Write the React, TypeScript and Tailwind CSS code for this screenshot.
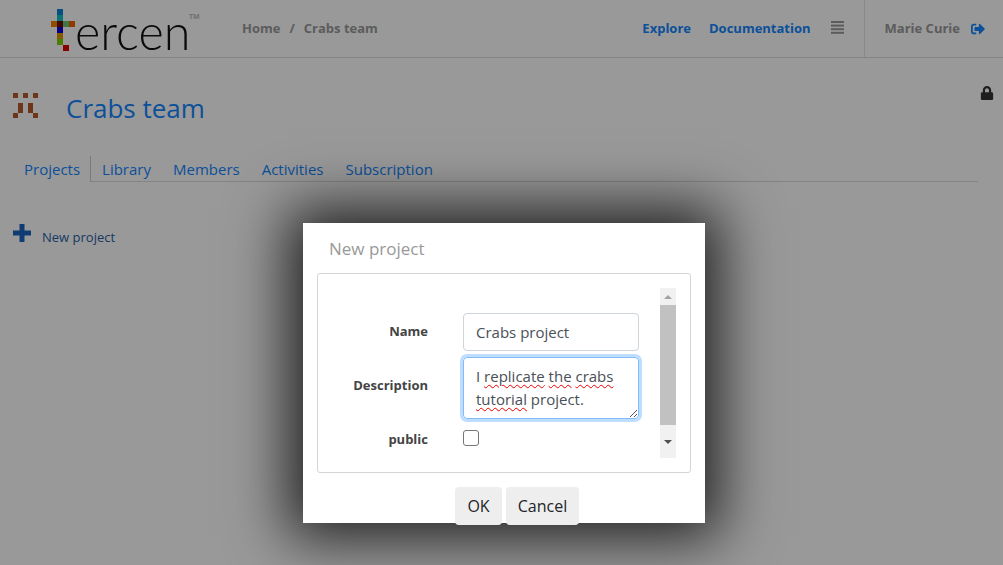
import { FaLock, FaSignOutAlt } from "react-icons/fa";

const FONT = { fontFamily: '"Open Sans", sans-serif' };

const TABS = ["Library", "Members", "Activities", "Subscription"];

function Logo() {
  return (
    <div className="relative h-[50px] w-[150px]">
      <svg width="26" height="42" viewBox="0 0 26 42" className="absolute left-0 top-[5px]">
        <rect x="7" y="0" width="6" height="6" fill="#0a84d8" />
        <rect x="7" y="6" width="6" height="6" fill="#12c2c8" />
        <rect x="1" y="12" width="6" height="6" fill="#f08000" />
        <rect x="7" y="12" width="6" height="6" fill="#6d1000" />
        <rect x="13" y="12" width="6" height="6" fill="#64c878" />
        <rect x="19" y="12" width="6" height="6" fill="#f06000" />
        <rect x="7" y="18" width="6" height="6" fill="#1000d0" />
        <rect x="7" y="24" width="6" height="6" fill="#e09800" />
        <rect x="7" y="30" width="6" height="6" fill="#80d000" />
        <rect x="13" y="36" width="6" height="6" fill="#e00000" />
      </svg>
      <span className="absolute left-[25px] top-[-4px] text-[48.5px] leading-[62px] font-light text-[#111]" style={{ fontFamily: "Lato, sans-serif" }}>ercen</span>
      <span className="absolute left-[139px] top-[8px] text-[7px] font-bold text-[#bbb]">TM</span>
    </div>
  );
}

function TeamIcon() {
  return (
    <svg width="26" height="26" viewBox="0 0 26 26">
      <g fill="#b85a28">
        <rect x="0" y="0" width="5" height="5" />
        <rect x="10" y="0" width="5" height="5" />
        <rect x="20" y="0" width="5" height="5" />
        <rect x="5" y="10" width="5" height="10" />
        <rect x="15" y="10" width="5" height="10" />
        <rect x="0" y="20" width="5" height="5" />
        <rect x="20" y="20" width="5" height="5" />
      </g>
    </svg>
  );
}

function Bad({ children }: { children: string }) {
  return <span className="underline decoration-[#e00] decoration-wavy decoration-1 underline-offset-2">{children}</span>;
}

export default function App() {
  return (
    <div className="relative h-[565px] w-[1003px] overflow-hidden bg-white" style={FONT}>
      <header className="flex h-[58px] items-center border-b border-[#ddd] pl-[50px]">
        <Logo />
        <nav className="ml-[42px] flex items-center gap-[9px] text-[13px] font-bold text-[#999]">
          <span>Home</span><span>/</span><span>Crabs team</span>
        </nav>
        <div className="ml-auto flex h-full items-center">
          <span className="text-[13px] font-bold text-[#1486ff]">Explore</span>
          <span className="ml-[18px] text-[13px] font-bold text-[#1486ff]">Documentation</span>
          <svg width="13" height="13" viewBox="0 0 13 13" className="mb-[3px] ml-[20px]">
            <g fill="#999">
              <rect y="0" width="13" height="2" />
              <rect y="3.6" width="13" height="2" />
              <rect y="7.2" width="13" height="2" />
              <rect y="10.8" width="13" height="2" />
            </g>
          </svg>
          <div className="ml-[20px] flex h-full items-center border-l border-[#e4e4e4] pl-[20px] pr-[18px]">
            <span className="text-[13px] font-bold text-[#999]">Marie Curie</span>
            <FaSignOutAlt className="ml-[11px] text-[14px] text-[#1486ff]" />
          </div>
        </div>
      </header>

      <div className="flex items-start pl-[13px] pr-[9px] pt-[35px]">
        <TeamIcon />
        <h1 className="-mt-[3px] ml-[27px] text-[26px] leading-[36px] text-[#1486ff]">Crabs team</h1>
        <FaLock className="ml-auto mt-[-7px] text-[14px] text-[#333]" />
      </div>

      <div className="ml-[8px] mr-[25px] mt-[30px] flex h-[26px] items-start border-b border-[#ddd] text-[15px] text-[#1486ff]">
        <span className="h-[26px] border-r border-[#ccc] bg-white pl-[16px] pr-[10px] leading-[26px]">Projects</span>
        {TABS.map(t => <span key={t} className="mx-[11px] leading-[26px]">{t}</span>)}
      </div>

      <div className="ml-[13px] mt-[42px] flex items-start">
        <svg width="18" height="18" viewBox="0 0 18 18">
          <path d="M6.5 0h5v6.5H18v5h-6.5V18h-5v-6.5H0v-5h6.5z" fill="#1a64c0" />
        </svg>
        <span className="ml-[11px] mt-[4px] text-[13px] text-[#2a5fa5]">New project</span>
      </div>

      {/* backdrop */}
      <div className="absolute inset-0 bg-black/40" />

      <div className="absolute left-[303px] top-[223px] flex h-[300px] w-[402px] flex-col bg-white px-[14px] shadow-[0_0_55px_14px_rgba(0,0,0,0.8)]">
        <div className="h-[50px] shrink-0 pl-[12px] pt-[12px] text-[17px] leading-[28px] text-[#999]">New project</div>
        <div className="flex h-[200px] shrink-0 rounded-[3px] border border-[#d5d5d5] pr-[14px] pt-[14px]">
          <div className="grid h-[170px] flex-1 grid-cols-[110px_176px] content-start gap-x-[35px] pt-[25px]">
            <label className="h-[44px] pt-[9px] text-right text-[13px] font-bold text-[#444]">Name</label>
            <div className="flex h-[38px] items-center rounded-[4px] border border-[#ced4da] pl-[12px] pt-[1px] text-[15px] text-[#495057]">Crabs project</div>
            <label className="h-[62px] pt-[19px] text-right text-[13px] font-bold text-[#444]">Description</label>
            <div className="relative h-[62px] rounded-[4px] border border-[#80bdff] pl-[12px] pt-[7px] text-[15px] leading-[23px] text-[#495057] shadow-[0_0_0_3px_rgba(0,123,255,0.25)]">
              <div><span>I </span><Bad>replicate</Bad><span> </span><Bad>the</Bad><span> </span><Bad>crabs</Bad></div>
              <div><Bad>tutorial</Bad><span> project.</span></div>
              <svg width="8" height="8" viewBox="0 0 8 8" className="absolute bottom-[1px] right-[1px]">
                <path d="M1 8 8 1M5 8l3-3" stroke="#555" strokeWidth="1" fill="none" />
              </svg>
            </div>
            <label className="mt-[11px] text-right text-[13px] font-bold text-[#444]">public</label>
            <div className="mt-[11px] h-[16px] w-[16px] rounded-[3px] border border-[#767676] bg-white" />
          </div>
          <div className="flex h-[170px] w-[16px] shrink-0 flex-col items-center bg-[#f1f1f1]">
            <div className="flex h-[17px] items-center">
              <div className="h-0 w-0 border-x-[4px] border-b-[4px] border-x-transparent border-b-[#a3a3a3]" />
            </div>
            <div className="h-[120px] w-full bg-[#c1c1c1]" />
            <div className="flex flex-1 items-center">
              <div className="h-0 w-0 border-x-[4px] border-t-[4px] border-x-transparent border-t-[#505050]" />
            </div>
          </div>
        </div>
        <div className="mt-[14px] flex shrink-0 justify-center gap-[4px] pl-[26px] text-[16px] text-[#212529]">
          <button className="h-[38px] w-[47px] rounded-[4px] bg-[#eee]">OK</button>
          <button className="h-[38px] w-[73px] rounded-[4px] bg-[#eee]">Cancel</button>
        </div>
      </div>
    </div>
  );
}
